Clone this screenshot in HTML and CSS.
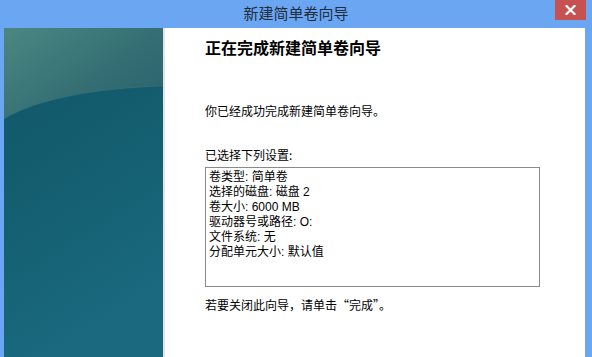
FILE: index.html
```html
<!DOCTYPE html>
<html lang="zh-CN">
<head>
    <meta charset="UTF-8">
    <meta name="viewport" content="width=device-width, initial-scale=1.0">
    <title>新建简单卷向导</title>
    <link rel="stylesheet" href="styles.css">
</head>
<body>

    <div class="window">
        <!-- Title bar -->
        <div class="titlebar">
            <div class="title">新建简单卷向导</div>
            <div class="close-btn">
                <svg width="11" height="10" viewBox="0 0 11 10">
                    <path d="M1.5 1 L9.5 9 M9.5 1 L1.5 9" stroke="#fff" stroke-width="2.2" stroke-linecap="square"/>
                </svg>
            </div>
        </div>

        <div class="frame">
            <!-- Left banner -->
            <div class="side">
                <svg class="side-art" viewBox="0 0 159 329" preserveAspectRatio="none">
                    <defs>
                        <linearGradient id="lower" x1="0" y1="0" x2="0.3" y2="1">
                            <stop offset="0" stop-color="#0f5566"/>
                            <stop offset="0.5" stop-color="#145e70"/>
                            <stop offset="1" stop-color="#1a697e"/>
                        </linearGradient>
                        <linearGradient id="upper" x1="0" y1="0" x2="1" y2="0.8">
                            <stop offset="0" stop-color="#4a8883"/>
                            <stop offset="0.6" stop-color="#356f74"/>
                            <stop offset="1" stop-color="#2b646e"/>
                        </linearGradient>
                    </defs>
                    <rect width="159" height="329" fill="url(#lower)"/>
                    <path d="M0 91 C30 72 90 60 159 58 V0 H0 Z" fill="url(#upper)"/>
                    <path d="M0 91 C30 72 90 60 159 58" fill="none" stroke="#3a787b" stroke-width="1" opacity="0.5"/>
                </svg>
            </div>

            <!-- Wizard page -->
            <div class="content">
                <h1 class="heading">正在完成新建简单卷向导</h1>
                <p class="intro">你已经成功完成新建简单卷向导。</p>
                <p class="label">已选择下列设置:</p>
                <div class="summary">
                    <div class="summary-line">卷类型: 简单卷</div>
                    <div class="summary-line">选择的磁盘: 磁盘 2</div>
                    <div class="summary-line">卷大小: 6000 MB</div>
                    <div class="summary-line">驱动器号或路径: O:</div>
                    <div class="summary-line">文件系统: 无</div>
                    <div class="summary-line">分配单元大小: 默认值</div>
                </div>
                <p class="hint">若要关闭此向导，请单击“完成”。</p>
            </div>
        </div>
    </div>

</body>
</html>
```

FILE: styles.css
```css
body {
    margin: 0;
    background: #6ba6f3;
    font-family: "Noto Sans CJK SC", "Noto Sans", sans-serif;
    overflow: hidden;
}

.window {
    display: flex;
    flex-direction: column;
    width: 592px;
    height: 357px;
}

.titlebar {
    display: grid;
    grid-template-columns: 1fr auto 1fr;
    height: 28px;
}

.title {
    grid-column: 2;
    padding-top: 4px;
    font-size: 15px;
    line-height: 18px;
    color: #1f2d3d;
}

.close-btn {
    grid-column: 3;
    justify-self: end;
    display: flex;
    justify-content: center;
    align-items: center;
    width: 31px;
    height: 20px;
    margin-right: 6px;
    background: #c75050;
}

.frame {
    display: flex;
    flex: 1;
    padding: 0 7px 0 4px;
    min-height: 0;
}

.side {
    width: 159px;
    flex-shrink: 0;
}

.side-art {
    display: block;
    width: 100%;
    height: 100%;
}

.content {
    flex: 1;
    background: #fff;
    border-left: 2px solid #e4e4e4;
    padding: 9px 0 0 40px;
    color: #000;
    font-size: 12px;
}

.heading {
    margin: 0;
    font-size: 16px;
    line-height: 20px;
    font-weight: bold;
}

.intro {
    margin: 46px 0 0;
    line-height: 16px;
}

.label {
    margin: 28px 0 0;
    line-height: 16px;
}

.summary {
    box-sizing: border-box;
    width: 335px;
    height: 120px;
    margin-top: 4px;
    padding: 2px 3px;
    border: 1px solid #8a8a8a;
    font-family: "Liberation Sans", "Noto Sans CJK SC", sans-serif;
    line-height: 15px;
}

.summary-line {
    height: 15px;
}

.hint {
    margin: 10px 0 0;
    line-height: 16px;
}
```
